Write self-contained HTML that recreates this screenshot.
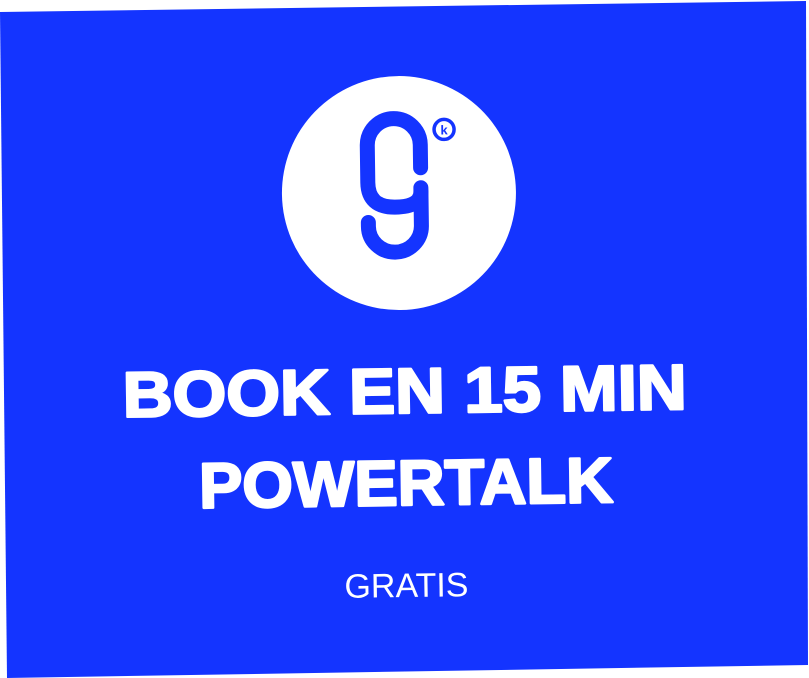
<!DOCTYPE html>
<html><head><style>
html,body{margin:0;padding:0;background:#fff;width:809px;height:678px;overflow:hidden}
svg{display:block}
</style></head><body>
<svg width="809" height="678" viewBox="0 0 809 678" xmlns="http://www.w3.org/2000/svg">
<polygon points="0,12 806,1 808,665 7,678" fill="#1434FF"/>
<g transform="rotate(-0.8 404 340)">
<circle cx="401" cy="193" r="117" fill="#fff"/>
<g fill="none" stroke="#1434FF" stroke-width="15" stroke-linecap="round">
<path d="M423,168 V145 A26.5,26.5 0 0 0 370,145 V182 Q370,207 397,207 Q423,207 423,192"/>
<path d="M423,188 V226 A26.5,26 0 0 1 370,226 V222"/>
</g>
<circle cx="447" cy="130" r="10" fill="none" stroke="#1434FF" stroke-width="3.5"/>
<text x="447" y="135" text-anchor="middle" font-family="Liberation Sans, sans-serif" font-weight="bold" font-size="13" fill="#1434FF">k</text>
<g font-family="Liberation Sans, sans-serif" font-weight="bold" font-size="64" fill="#fff" stroke="#fff" stroke-width="2.5" stroke-linejoin="round">
<text x="404" y="413" text-anchor="middle" textLength="564" lengthAdjust="spacingAndGlyphs">BOOK EN 15 MIN</text>
<text x="404" y="505" text-anchor="middle" textLength="414" lengthAdjust="spacingAndGlyphs">POWERTALK</text>
</g>
<text x="403" y="597" text-anchor="middle" font-family="Liberation Sans, sans-serif" font-size="34" fill="#fff" textLength="124" lengthAdjust="spacingAndGlyphs">GRATIS</text>
</g>
</svg>
</body></html>
